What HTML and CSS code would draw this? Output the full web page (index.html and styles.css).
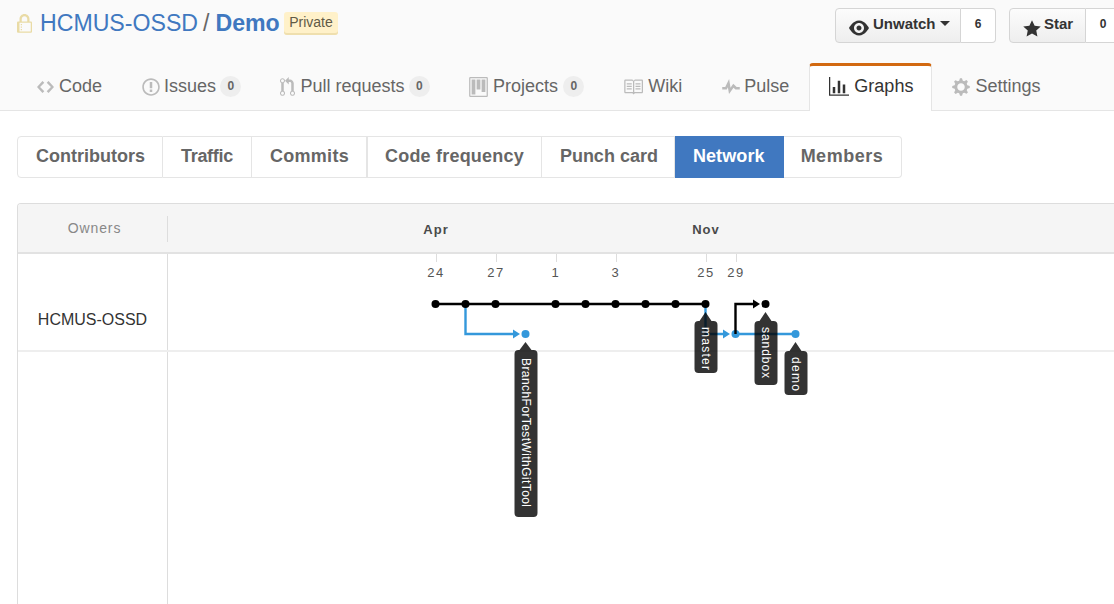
FILE: index.html
```html
<!DOCTYPE html>
<html lang="en">
<head>
<meta charset="utf-8">
<title>Network Graph</title>
<link rel="stylesheet" href="styles.css">
</head>
<body>
<header class="repohead">
  <div class="container">
    <div class="title-row">
      <h1 class="repo-title">
        <svg class="lock" viewBox="0 0 12 16"><path d="M4 13H3v-1h1v1zm8-6v7c0 .55-.45 1-1 1H1c-.55 0-1-.45-1-1V7c0-.55.45-1 1-1h1V4c0-2.2 1.8-4 4-4s4 1.8 4 4v2h1c.55 0 1 .45 1 1zM3.8 6h4.41V4c0-1.22-.98-2.2-2.2-2.2-1.22 0-2.2.98-2.2 2.2v2H3.8zM11 7H2v7h9V7zM4 8H3v1h1V8zm0 2H3v1h1v-1z"/></svg>
        <a class="owner">HCMUS-OSSD</a><span class="slash">/</span><a class="repo">Demo</a>
        <span class="private">Private</span>
      </h1>
      <div class="actions">
        <div class="btn-group">
          <div class="btn watch">
            <svg class="btn-icon eye" viewBox="0 0 16 16"><path d="M8.06 2C3 2 0 8 0 8s3 6 8.06 6C13 14 16 8 16 8s-3-6-7.94-6zM8 12c-2.2 0-4-1.78-4-4 0-2.2 1.8-4 4-4 2.22 0 4 1.8 4 4 0 2.22-1.78 4-4 4zm2-4c0 1.11-.89 2-2 2-1.11 0-2-.89-2-2 0-1.11.89-2 2-2 1.11 0 2 .89 2 2z"/></svg>
            <span class="btn-text">Unwatch</span><i class="caret"></i>
          </div>
          <div class="count">6</div>
        </div>
        <div class="btn-group">
          <div class="btn star">
            <svg class="btn-icon star-icon" viewBox="0 0 14 16"><path d="M14 6l-4.9-.64L7 1 4.9 5.36 0 6l3.6 3.26L2.67 14 7 11.67 11.33 14l-.93-4.74L14 6z"/></svg>
            <span class="btn-text">Star</span>
          </div>
          <div class="count count-star">0</div>
        </div>
      </div>
    </div>
    <nav class="tabs">
      <a class="tab"><svg class="ticon w-code" viewBox="0 0 14 16"><path d="M9.5 3L8 4.5 11.5 8 8 11.5 9.5 13 14 8 9.5 3zm-5 0L0 8l4.5 5L6 11.5 2.5 8 6 4.5 4.5 3z"/></svg>Code</a>
      <a class="tab"><svg class="ticon w-issue" viewBox="0 0 14 16"><path d="M7 2.3c3.14 0 5.7 2.56 5.7 5.7s-2.56 5.7-5.7 5.7A5.71 5.71 0 0 1 1.3 8c0-3.14 2.56-5.7 5.7-5.7zM7 1C3.14 1 0 4.14 0 8s3.14 7 7 7 7-3.14 7-7-3.14-7-7-7zm1 3H6v5h2V4zm0 6H6v2h2v-2z"/></svg>Issues<span class="badge">0</span></a>
      <a class="tab"><svg class="ticon w-pr" viewBox="0 0 12 16"><path d="M11 11.28V5c-.03-.78-.34-1.47-.94-2.06C9.46 2.35 8.78 2.03 8 2H7V0L4 3l3 3V4h1c.27.02.48.11.69.31.21.2.3.42.31.69v6.28A1.993 1.993 0 0 0 10 15a1.993 1.993 0 0 0 1-3.72zm-1 2.92c-.66 0-1.2-.55-1.2-1.2 0-.65.55-1.2 1.2-1.2.65 0 1.2.55 1.2 1.2 0 .65-.55 1.2-1.2 1.2zM4 3c0-1.11-.89-2-2-2a1.993 1.993 0 0 0-1 3.72v6.56A1.993 1.993 0 0 0 2 15a1.993 1.993 0 0 0 1-3.72V4.72c.59-.34 1-.98 1-1.72zm-.8 10c0 .66-.55 1.2-1.2 1.2-.65 0-1.2-.55-1.2-1.2 0-.65.55-1.2 1.2-1.2.65 0 1.2.55 1.2 1.2zM2 4.2C1.34 4.2.8 3.65.8 3c0-.65.55-1.2 1.2-1.2.65 0 1.2.55 1.2 1.2 0 .65-.55 1.2-1.2 1.2z"/></svg>Pull requests<span class="badge">0</span></a>
      <a class="tab"><svg class="ticon w-proj" viewBox="0 0 15 16"><path fill-rule="evenodd" d="M10 12h3V2h-3v10zm-4-2h3V2H6v8zm-4 4h3V2H2v12zm-1 1h13V1H1v14zM14 0H1a1 1 0 0 0-1 1v14a1 1 0 0 0 1 1h13a1 1 0 0 0 1-1V1a1 1 0 0 0-1-1z"/></svg>Projects<span class="badge badge-wide">0</span></a>
      <a class="tab"><svg class="ticon w-book" viewBox="0 0 16 16"><path d="M3 5h4v1H3V5zm0 3h4V7H3v1zm0 2h4V9H3v1zm11-5h-4v1h4V5zm0 2h-4v1h4V7zm0 2h-4v1h4V9zm2-6v9c0 .55-.45 1-1 1H9.5l-1 1-1-1H2c-.55 0-1-.45-1-1V3c0-.55.45-1 1-1h5.5l1 1 1-1H15c.55 0 1 .45 1 1zm-8 .5L7.5 3H2v9h6V3.5zm7-.5H9.5l-.5.5V12h6V3z"/></svg>Wiki</a>
      <a class="tab"><svg class="ticon w-pulse" viewBox="0 0 14 16"><path d="M11.5 8L8.8 5.4 6.6 8.5 5.5 1.6 2.38 8H0v2h3.6l.9-1.8.9 5.4L9 8.5l1.6 1.5H14V8h-2.5z"/></svg>Pulse</a>
      <a class="tab selected"><svg class="ticon w-graph" viewBox="0 0 16 16"><path d="M16 14v1H0V0h1v14h15zM5 13H3V8h2v5zm4 0H7V3h2v10zm4 0h-2V6h2v7z"/></svg>Graphs</a>
      <a class="tab"><svg class="ticon w-gear" viewBox="0 0 14 16"><path d="M14 8.77v-1.6l-1.94-.64-.45-1.09.88-1.84-1.13-1.13-1.81.91-1.09-.45-.69-1.92h-1.6l-.63 1.94-1.11.45-1.84-.88-1.13 1.13.91 1.81-.45 1.09L0 7.23v1.59l1.94.64.45 1.09-.88 1.84 1.13 1.13 1.81-.91 1.09.45.69 1.92h1.59l.63-1.94 1.11-.45 1.84.88 1.13-1.13-.92-1.81.47-1.09L14 8.75v.02zM7 11c-1.66 0-3-1.34-3-3s1.34-3 3-3 3 1.34 3 3-1.34 3-3 3z"/></svg>Settings</a>
    </nav>
  </div>
</header>

<main class="container">
  <nav class="subnav">
    <a class="subnav-item contributors">Contributors</a>
    <a class="subnav-item traffic">Traffic</a>
    <a class="subnav-item commits">Commits</a>
    <a class="subnav-item frequency">Code frequency</a>
    <a class="subnav-item punch">Punch card</a>
    <a class="subnav-item active">Network</a>
    <a class="subnav-item members">Members</a>
  </nav>

  <section class="network">
    <div class="net-head">
      <div class="owners-label"><span>Owners</span></div>
    </div>
    <div class="net-row">
      <div class="owner-cell">HCMUS-OSSD</div>
      <div class="lane"></div>
    </div>
    <div class="net-row rest">
      <div class="owner-cell"></div>
      <div class="lane"></div>
    </div>

    <svg class="graph" viewBox="18 204 1103 400" width="1103" height="400">
      <g class="ticks">
        <path d="M436.5 254v8M496.5 254v8M556.5 254v8M616.5 254v8M706.5 254v8M736.5 254v8"/>
      </g>
      <g class="months">
        <text x="436" y="234">Apr</text>
        <text x="706" y="234">Nov</text>
      </g>
      <g class="days">
        <text x="436" y="277">24</text>
        <text x="496" y="277">27</text>
        <text x="556" y="277">1</text>
        <text x="616" y="277">3</text>
        <text x="706" y="277">25</text>
        <text x="736" y="277">29</text>
      </g>

      <g class="line-blue">
        <path d="M465.5 304v30H515"/>
        <path d="M705.5 304v30H724"/>
        <path d="M735.5 334H795.5"/>
      </g>
      <g class="head-blue">
        <path d="M513 329.5l7 4.5-7 4.5z"/>
        <path d="M723 329.5l7 4.5-7 4.5z"/>
      </g>
      <g class="dots-blue">
        <circle cx="525.5" cy="334" r="4"/>
        <circle cx="735.5" cy="334" r="4"/>
        <circle cx="795.5" cy="334" r="4"/>
      </g>

      <g class="line-black">
        <path d="M435.5 304H705.5"/>
        <path d="M735.5 334V304H755"/>
      </g>
      <path class="head-black" d="M753 299.5l7 4.5-7 4.5z"/>
      <g class="dots-black">
        <circle cx="435.5" cy="304" r="4"/>
        <circle cx="465.5" cy="304" r="4"/>
        <circle cx="495.5" cy="304" r="4"/>
        <circle cx="555.5" cy="304" r="4"/>
        <circle cx="585.5" cy="304" r="4"/>
        <circle cx="615.5" cy="304" r="4"/>
        <circle cx="645.5" cy="304" r="4"/>
        <circle cx="675.5" cy="304" r="4"/>
        <circle cx="705.5" cy="304" r="4"/>
        <circle cx="765.5" cy="304" r="4"/>
      </g>

      <g class="tips">
        <path d="M525.5 342l6 8h2a4 4 0 0 1 4 4v159a4 4 0 0 1-4 4h-15a4 4 0 0 1-4-4v-159a4 4 0 0 1 4-4h1z"/>
        <path d="M705.5 312l6 9h2a4 4 0 0 1 4 4v44a4 4 0 0 1-4 4h-15a4 4 0 0 1-4-4v-44a4 4 0 0 1 4-4h1z"/>
        <path d="M765.5 312l6 9h2a4 4 0 0 1 4 4v56a4 4 0 0 1-4 4h-15a4 4 0 0 1-4-4v-56a4 4 0 0 1 4-4h1z"/>
        <path d="M795.5 342l6 9h2a4 4 0 0 1 4 4v36a4 4 0 0 1-4 4h-15a4 4 0 0 1-4-4v-36a4 4 0 0 1 4-4h1z"/>
      </g>
      <g class="tip-text">
        <text transform="translate(521.5 358) rotate(90)" textLength="149">BranchForTestWithGitTool</text>
        <text transform="translate(702 327) rotate(90)" textLength="43">master</text>
        <text transform="translate(762 327) rotate(90)" textLength="51">sandbox</text>
        <text transform="translate(792 357) rotate(90)" textLength="34">demo</text>
      </g>
    </svg>
  </section>
</main>
</body>
</html>
```

FILE: styles.css
```css
* { box-sizing: border-box; }

html, body {
  margin: 0;
  padding: 0;
  height: 604px;
  overflow: hidden;
  background: #fff;
  font-family: "Liberation Sans", Arial, sans-serif;
  color: #333;
}

.container {
  width: 1104px;
  margin-left: 17px;
}

.repohead {
  height: 111px;
  background: #fafafa;
  border-bottom: 1px solid #e5e5e5;
}

.title-row {
  display: flex;
  justify-content: space-between;
  height: 63px;
  padding-top: 8px;
}

.repo-title {
  display: flex;
  align-items: flex-start;
  margin: 0;
  font-size: 23.14px;
  font-weight: 400;
  line-height: 30px;
}

.lock {
  width: 15px;
  height: 20px;
  margin: 6px 8px 0 0;
  fill: #e9dba5;
}

.owner, .repo { color: #4078c0; }
.repo { font-weight: 700; }
.slash { margin: 0 6px 0 5px; color: #666; }

.private {
  margin: 4px 0 0 4px;
  padding: 0 5.5px;
  height: 23px;
  font-size: 14px;
  line-height: 21px;
  color: #5f5a46;
  background: #fff1c9;
  border-radius: 3px;
  box-shadow: inset 0 -2px 0 #efdfae;
}

.actions { display: flex; gap: 13px; }

.btn-group { display: flex; height: 35px; }

.btn {
  display: flex;
  align-items: flex-start;
  padding: 6px 0 0 13px;
  font-size: 15px;
  font-weight: 700;
  line-height: 17px;
  color: #333;
  background: linear-gradient(#fcfcfc, #eee);
  border: 1px solid #d5d5d5;
  border-radius: 4px 0 0 4px;
}

.watch { width: 126px; }
.star { width: 77px; }

.btn-icon { fill: #333; flex: none; }
.eye { width: 20px; height: 20px; margin: 3px 4px 0 0; }
.star-icon { width: 18px; height: 20px; margin: 4px 3px 0 0; }

.caret {
  width: 0;
  height: 0;
  margin: 6px 0 0 4px;
  border: 5px solid transparent;
  border-top-color: #333;
  border-bottom: 0;
}

.count {
  display: flex;
  justify-content: center;
  width: 35px;
  padding-top: 7px;
  font-size: 12px;
  font-weight: 700;
  line-height: 17px;
  color: #333;
  background: #fff;
  border: 1px solid #d5d5d5;
  border-left: 0;
  border-radius: 0 4px 4px 0;
}

.tabs {
  display: flex;
  height: 48px;
}

.tab {
  display: flex;
  align-items: center;
  height: 48px;
  padding: 0 20px 1px;
  font-size: 18px;
  color: #666;
  white-space: nowrap;
}

.tab.selected {
  padding: 0 18px 4px 19px;
  color: #333;
  background: #fff;
  border: 1px solid #e5e5e5;
  border-top: 3px solid #d26911;
  border-bottom: 0;
  border-radius: 4px 4px 0 0;
}

.ticon { height: 20px; margin-right: 6px; fill: #bbb; flex: none; }
.w-code { width: 17px; margin-right: 5px; }
.w-issue { width: 18px; margin-right: 4px; }
.w-pr { width: 15px; margin-right: 5px; }
.w-proj { width: 19px; margin-right: 5px; }
.w-book { width: 20px; margin-right: 5px; }
.w-pulse { width: 18px; margin-right: 4px; }
.w-graph { width: 20px; margin-right: 5px; fill: #333; }
.w-gear { width: 18px; margin-right: 5px; }

.badge {
  width: 21px;
  height: 21px;
  margin: 0 -1px 0 4.4px;
  font-size: 12px;
  font-weight: 700;
  line-height: 21px;
  text-align: center;
  color: #666;
  background: #eee;
  border-radius: 11px;
}

.badge-wide { margin-left: 5.4px; }

.subnav {
  display: inline-flex;
  margin-top: 25px;
  height: 42px;
  vertical-align: top;
}

.subnav-item {
  padding: 0 18px;
  font-size: 18px;
  font-weight: 700;
  line-height: 38px;
  color: #666;
  white-space: nowrap;
  border: 1px solid #e5e5e5;
  border-left: 0;
}

.contributors {
  padding-right: 17px;
  border-left: 1px solid #e5e5e5;
  border-radius: 4px 0 0 4px;
}

.traffic { letter-spacing: -.3px; }

.commits {
  padding-right: 17px;
  letter-spacing: .3px;
}

.frequency {
  padding: 0 17px;
  letter-spacing: .2px;
  border-left: 1px solid #e5e5e5;
}

.punch { padding-right: 16px; }

.members {
  padding-left: 17px;
  letter-spacing: .5px;
  border-radius: 0 4px 4px 0;
}

.subnav-item.active {
  letter-spacing: .1px;
  color: #fff;
  background: #4078c0;
  border-color: #4078c0;
}

.network {
  position: relative;
  width: 1104px;
  height: 401px;
  margin-top: 25px;
  border: 1px solid #ddd;
  border-bottom: 0;
  border-radius: 4px 4px 0 0;
  overflow: hidden;
}

.net-head {
  height: 50px;
  padding-top: 12px;
  background: #f5f5f5;
  border-bottom: 2px solid #e2e2e2;
}

.owners-label {
  width: 150px;
  height: 26px;
  padding-left: 4px;
  font-size: 14px;
  letter-spacing: .9px;
  line-height: 24px;
  text-align: center;
  color: #888;
  border-right: 1px solid #ddd;
}

.net-row {
  display: grid;
  grid-template-columns: 150px 1fr;
  height: 98px;
  border-bottom: 2px solid #eee;
}

.net-row.rest { height: 252px; border-bottom: 0; }

.owner-cell {
  padding-top: 57px;
  font-size: 16px;
  line-height: 18px;
  text-align: center;
  color: #333;
  border-right: 1px solid #ddd;
}

.graph {
  position: absolute;
  left: 0;
  top: 0;
  font-family: "Liberation Sans", Arial, sans-serif;
}

.ticks path { stroke: #ddd; stroke-width: 1; fill: none; }

.months text {
  font-size: 13px;
  font-weight: 700;
  letter-spacing: 1px;
  text-anchor: middle;
  fill: #4a4a4a;
}

.days text {
  font-size: 13px;
  letter-spacing: 1.6px;
  text-anchor: middle;
  fill: #555;
}

.line-blue path { stroke: #3498db; stroke-width: 2.4; fill: none; }
.head-blue path { fill: #3498db; }
.dots-blue circle { fill: #3498db; }
.line-black path { stroke: #000; stroke-width: 2.4; fill: none; }
.head-black { fill: #000; }
.dots-black circle { fill: #000; }

.tips path { fill: rgba(0, 0, 0, .8); }

.tip-text text {
  font-size: 12px;
  fill: #fff;
}
```
